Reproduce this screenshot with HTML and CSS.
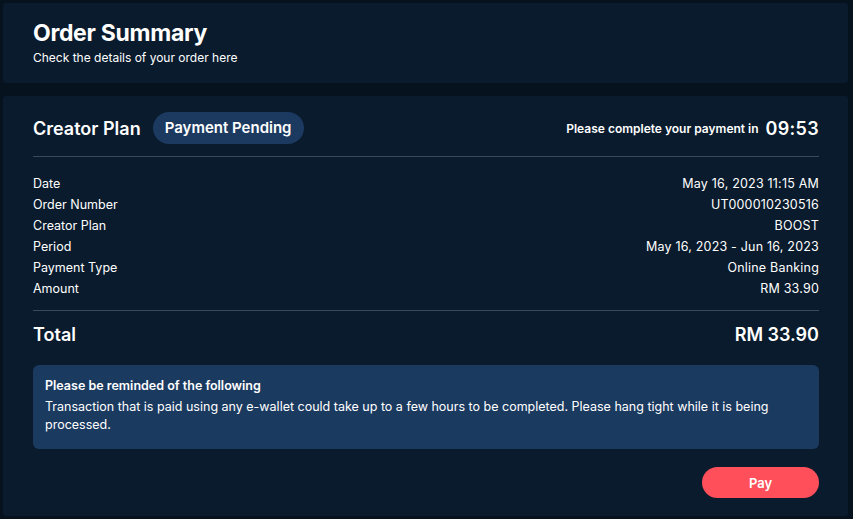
FILE: index.html
```html
<!DOCTYPE html>
<html>
  <head>
    <meta charset="UTF-8">
    <title>Order Summary</title>
    <link rel="stylesheet" href="styles.css">
  </head>
  <body>
    <div class="page">
      <div class="card head-card">
        <h1>Order Summary</h1>
        <p class="sub">Check the details of your order here</p>
      </div>

      <div class="card main-card">
        <div class="top-row">
          <div class="plan">
            <span class="plan-name">Creator Plan</span>
            <span class="badge">Payment Pending</span>
          </div>
          <div class="timer">
            <span class="timer-label">Please complete your payment in</span>
            <span class="timer-value">09:53</span>
          </div>
        </div>

        <div class="details">
          <div class="row"><span>Date</span><span>May 16, 2023 11:15 AM</span></div>
          <div class="row"><span>Order Number</span><span>UT000010230516</span></div>
          <div class="row"><span>Creator Plan</span><span>BOOST</span></div>
          <div class="row"><span>Period</span><span>May 16, 2023 - Jun 16, 2023</span></div>
          <div class="row"><span>Payment Type</span><span>Online Banking</span></div>
          <div class="row"><span>Amount</span><span>RM 33.90</span></div>
        </div>

        <div class="total">
          <span>Total</span>
          <span>RM 33.90</span>
        </div>

        <div class="notice">
          <div class="notice-title">Please be reminded of the following</div>
          <p>Transaction that is paid using any e-wallet could take up to a few hours to be completed. Please hang tight while it is being processed.</p>
        </div>

        <div class="actions">
          <button class="pay-btn">Pay</button>
        </div>
      </div>
    </div>
  </body>
</html>
```

FILE: styles.css
```css
body {
  margin: 0;
  background: #06121e;
  color: #ffffff;
  font-family: Inter, "Noto Sans", sans-serif;
}

.page {
  padding: 3px 5px 3px 3px;
  display: flex;
  flex-direction: column;
  gap: 13px;
}

.card {
  background: #0a1b2d;
  border-radius: 3px;
  padding: 0 29px 0 30px;
}

.head-card {
  height: 80px;
  padding-top: 15px;
  box-sizing: border-box;
}

h1 {
  margin: 0;
  font-size: 23px;
  font-weight: 700;
  line-height: 30px;
  letter-spacing: -0.3px;
}

.sub {
  margin: 2px 0 0;
  font-size: 12px;
  line-height: 16px;
}

.main-card {
  padding-top: 16px;
  padding-bottom: 18px;
}

.top-row {
  display: flex;
  justify-content: space-between;
  align-items: center;
  height: 32px;
  padding-bottom: 12px;
  border-bottom: 1px solid #3a4a5c;
}

.plan {
  display: flex;
  align-items: center;
  gap: 12px;
}

.plan-name {
  font-size: 18px;
  font-weight: 600;
}

.badge {
  background: #1c3a5f;
  border-radius: 16px;
  height: 32px;
  line-height: 32px;
  padding: 0 12px;
  font-size: 15px;
  font-weight: 600;
}

.timer {
  display: flex;
  align-items: center;
  gap: 7px;
}

.timer-label {
  font-size: 12px;
  font-weight: 600;
}

.timer-value {
  font-size: 18px;
  font-weight: 600;
  letter-spacing: 0.3px;
}

.details {
  padding: 16px 0 11px;
  border-bottom: 1px solid #3a4a5c;
  font-size: 12.5px;
}

.row {
  display: flex;
  justify-content: space-between;
  line-height: 21px;
}

.row span:last-child {
  letter-spacing: 0.2px;
}

.total {
  display: flex;
  justify-content: space-between;
  align-items: center;
  height: 46px;
  font-size: 18px;
  font-weight: 600;
}

.notice {
  margin-top: 8px;
  background: #1b3a5f;
  border-radius: 6px;
  padding: 12px 12px 15px;
  font-size: 12.5px;
}

.notice-title {
  font-weight: 600;
  line-height: 18px;
}

.notice p {
  margin: 3px 0 0;
  line-height: 18px;
}

.actions {
  display: flex;
  justify-content: flex-end;
  margin-top: 18px;
}

.pay-btn {
  width: 117px;
  height: 31px;
  border: none;
  border-radius: 16px;
  background: #ff4f5a;
  color: #ffffff;
  font-family: Inter, "Noto Sans", sans-serif;
  font-size: 13px;
  font-weight: 600;
  cursor: pointer;
}
```
